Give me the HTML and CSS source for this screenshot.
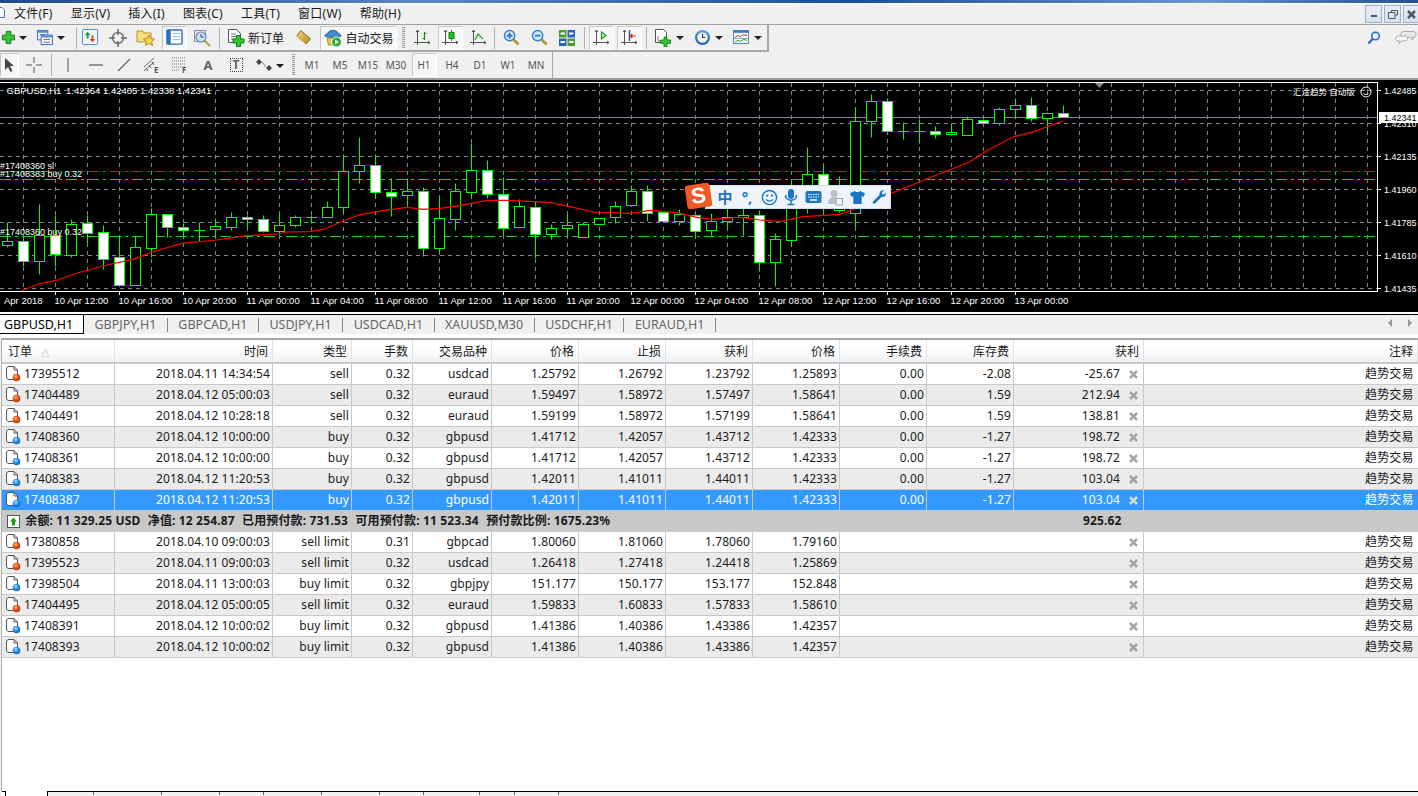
FILE: index.html
```html
<!DOCTYPE html>
<html lang="zh">
<head>
    <meta charset="UTF-8">
    <title>MetaTrader 4</title>
    <link rel="stylesheet" href="styles.css">
</head>
<body>
    <svg class="defs" width="0" height="0">
        <defs>
            <radialGradient id="ballRed" cx="40%" cy="35%" r="70%"><stop offset="0" stop-color="#ffb080"/><stop offset=".5" stop-color="#e8501c"/><stop offset="1" stop-color="#b02a08"/></radialGradient>
            <radialGradient id="ballBlue" cx="40%" cy="35%" r="70%"><stop offset="0" stop-color="#a8e0ff"/><stop offset=".5" stop-color="#2a90e0"/><stop offset="1" stop-color="#0c5cb0"/></radialGradient>
            <linearGradient id="gold" x1="0" y1="0" x2="1" y2="1"><stop offset="0" stop-color="#f4d878"/><stop offset="1" stop-color="#b08420"/></linearGradient>
            <linearGradient id="blueFace" x1="0" y1="0" x2="0" y2="1"><stop offset="0" stop-color="#5aa0e0"/><stop offset="1" stop-color="#1c5ca8"/></linearGradient>
            <symbol id="i-plus" viewBox="0 0 16 16"><path d="M5.5 1.5h5v4h4v5h-4v4h-5v-4h-4v-5h4z" fill="#35c435" stroke="#0e7d0e"/></symbol>
            <symbol id="i-profile" viewBox="0 0 18 18"><rect x="1.5" y="1.5" width="11" height="10" fill="#e8f0fa" stroke="#3a70b0"/><rect x="1.5" y="1.5" width="11" height="2.5" fill="#5a90d0"/><rect x="5.5" y="6.5" width="12" height="10" fill="#f4f8fd" stroke="#3a70b0"/><rect x="5.5" y="6.5" width="12" height="2.5" fill="#5a90d0"/><path d="M4 6h6M8 11h7M8 14h7" stroke="#666"/></symbol>
            <symbol id="i-market" viewBox="0 0 18 18"><rect x=".5" y=".5" width="16" height="16" rx="1.5" fill="#eef4fb" stroke="#4a86c8"/><path d="M6 3l3 3.5H7V10H5V6.5H3z" fill="#22a022"/><path d="M11 14l-3-3.500h2V7h2v3.500h2z" fill="#d84020"/></symbol>
            <symbol id="i-nav" viewBox="0 0 18 18"><circle cx="9" cy="9" r="5.500" fill="none" stroke="#777" stroke-width="1.500"/><path d="M9 0v6M9 12v6M0 9h6M12 9h6" stroke="#666" stroke-width="1.500"/></symbol>
            <symbol id="i-folder" viewBox="0 0 20 18"><path d="M1 2h6l1 2h7v9H1z" fill="#f4dc80" stroke="#b89030"/><path d="M13 6l1.700 3.600 3.800.5-2.800 2.600.8 3.800-3.500-2-3.500 2 .8-3.800-2.800-2.600 3.800-.5z" fill="#f8d848" stroke="#b08a20"/></symbol>
            <symbol id="i-terminal" viewBox="0 0 18 18"><rect x="1" y="1" width="16" height="15" rx="1" fill="#fff" stroke="#2a70c0" stroke-width="1.500"/><rect x="1" y="1" width="4" height="15" fill="#2a70c0"/><path d="M7 5h8M7 8h8M7 11h8" stroke="#8ab0dc"/></symbol>
            <symbol id="i-tester" viewBox="0 0 18 18"><rect x="1.500" y="1.500" width="11" height="11" fill="#e4e8ee" stroke="#8a94a4"/><circle cx="8" cy="8" r="5" fill="#cfe2f6" stroke="#6a88b0" stroke-width="1.200"/><path d="M8 5v3h2.500" stroke="#345" fill="none"/><path d="M12 12l5 5" stroke="#c09a30" stroke-width="2"/></symbol>
            <symbol id="i-order" viewBox="0 0 20 20"><path d="M2.500 1.500h8l4 4v9h-12z" fill="#fff" stroke="#555"/><path d="M5 6h5M5 8.500h7M5 11h3" stroke="#777"/><path d="M10.500 7.500h4v3.500H18v4h-3.500v3.500h-4V15H7v-4h3.500z" fill="#35c435" stroke="#0e7d0e"/></symbol>
            <symbol id="i-book" viewBox="0 0 18 18"><path d="M6 1.500l10.500 9-5 5.500L1.500 8z" fill="url(#gold)" stroke="#8a6a18"/><path d="M1.500 8l10 8.500" stroke="#fff3c0"/></symbol>
            <symbol id="i-auto" viewBox="0 0 20 20"><path d="M2 8c0-2 3-2 3.500-4 2-2 7-2 9 0 .5 2 3.500 2 3.500 4-3 2-13 2-16 0z" fill="#3f8fd0" stroke="#1e5e98"/><path d="M4 10h12l-1.500 7h-9z" fill="#e0c850" stroke="#a89028"/><circle cx="13.500" cy="14" r="5" fill="#2aa83a" stroke="#fff"/><path d="M12 11.500l4 2.500-4 2.500z" fill="#fff"/></symbol>
            <symbol id="i-bars" viewBox="0 0 18 18"><path d="M4.500 1v15M1 13.500h16" stroke="#555"/><path d="M3 3l1.500-2L6 3M15 12l2 1.500-2 1.500" fill="none" stroke="#555"/><path d="M11.500 3v8M9.500 9.500h2M11.500 4.500h2" stroke="#0c9a0c" stroke-width="1.200"/></symbol>
            <symbol id="i-candle" viewBox="0 0 18 18"><path d="M4.500 1v15M1 13.500h16" stroke="#555"/><path d="M3 3l1.500-2L6 3M15 12l2 1.500-2 1.500" fill="none" stroke="#555"/><path d="M10.500 1v11" stroke="#0c8a0c"/><rect x="8" y="3.500" width="5" height="6" fill="#22c022" stroke="#0c8a0c"/></symbol>
            <symbol id="i-line" viewBox="0 0 18 18"><path d="M4.500 1v15M1 13.500h16" stroke="#555"/><path d="M3 3l1.500-2L6 3M15 12l2 1.500-2 1.500" fill="none" stroke="#555"/><path d="M6 11l3-6 5 5" fill="none" stroke="#28a028" stroke-width="1.200"/></symbol>
            <symbol id="i-zoomin" viewBox="0 0 18 18"><path d="M10.500 10.500l6 6" stroke="#b89a30" stroke-width="3"/><circle cx="7" cy="7" r="5.500" fill="#cfe6fa" stroke="#3a80c8" stroke-width="1.500"/><path d="M4 7h6M7 4v6" stroke="#2a70b8" stroke-width="1.800"/></symbol>
            <symbol id="i-zoomout" viewBox="0 0 18 18"><path d="M10.500 10.500l6 6" stroke="#b89a30" stroke-width="3"/><circle cx="7" cy="7" r="5.500" fill="#cfe6fa" stroke="#3a80c8" stroke-width="1.500"/><path d="M4 7h6" stroke="#2a70b8" stroke-width="1.800"/></symbol>
            <symbol id="i-tile" viewBox="0 0 16 16"><rect width="7.500" height="7.500" fill="#4a9a30"/><rect x="8.500" width="7.500" height="7.500" fill="#2a60c0"/><rect y="8.500" width="7.500" height="7.500" fill="#2a60c0"/><rect x="8.500" y="8.500" width="7.500" height="7.500" fill="#4a9a30"/><path d="M1.500 3.500h4.500M10 3.500h4.500M1.500 12h4.500M10 12h4.500" stroke="#fff" stroke-width="2"/></symbol>
            <symbol id="i-shift" viewBox="0 0 18 18"><path d="M4.500 1v15M1 13.500h16" stroke="#555"/><path d="M3 3l1.500-2L6 3M15 12l2 1.500-2 1.500" fill="none" stroke="#555"/><path d="M9.500 3l4.500 3.500-4.500 3.500z" fill="#cdeccd" stroke="#14a014" stroke-width="1.200"/></symbol>
            <symbol id="i-scroll" viewBox="0 0 18 18"><path d="M4.500 1v15M1 13.500h16" stroke="#555"/><path d="M3 3l1.500-2L6 3M15 12l2 1.500-2 1.500" fill="none" stroke="#555"/><path d="M9.500 1v11" stroke="#2a5ca8" stroke-width="1.500"/><path d="M16 7h-4M12 5v4l-2-2z" fill="#c83818" stroke="#c83818"/></symbol>
            <symbol id="i-newchart" viewBox="0 0 18 18"><path d="M1.500 .5h8l3 3v10h-11z" fill="#fff" stroke="#555"/><path d="M4 7v5h5" fill="none" stroke="#777"/><path d="M10 8h3v3h3.500v3.500H13V18h-3v-3.500H6.500V11H10z" fill="#35c435" stroke="#0e7d0e" stroke-width=".8"/></symbol>
            <symbol id="i-clock" viewBox="0 0 18 18"><circle cx="9" cy="9" r="8" fill="url(#blueFace)"/><circle cx="9" cy="9" r="5.500" fill="#f4f4e8"/><path d="M9 5v4h3" fill="none" stroke="#335" stroke-width="1.300"/></symbol>
            <symbol id="i-template" viewBox="0 0 18 16"><rect x=".5" y=".5" width="16" height="14" fill="#f4f8fc" stroke="#4a80b8"/><rect x=".5" y=".5" width="16" height="2.500" fill="#3a78c0"/><path d="M2 8l3-2 3 1 3-2 4 1" fill="none" stroke="#b03010"/><path d="M1 9h15" stroke="#8aa0b8"/><path d="M2 13l3-2 3 1 3-2 4 1" fill="none" stroke="#2a9a2a"/></symbol>
            <symbol id="i-sell" viewBox="0 0 16 17"><path d="M1.500 4c0-1.500 1-2.500 2.500-2.500h5l3.500 3.500v9.500H4c-1.500 0-2.500-1-2.500-2.500z" fill="#fff" stroke="#555"/><path d="M9 1.500v3.500h3.500" fill="none" stroke="#555"/><circle cx="11.500" cy="12.500" r="3.800" fill="url(#ballRed)"/></symbol>
            <symbol id="i-buy" viewBox="0 0 16 17"><path d="M1.500 4c0-1.500 1-2.500 2.500-2.500h5l3.500 3.500v9.500H4c-1.500 0-2.500-1-2.500-2.500z" fill="#fff" stroke="#555"/><path d="M9 1.500v3.500h3.500" fill="none" stroke="#555"/><circle cx="11.500" cy="12.500" r="3.800" fill="url(#ballBlue)"/></symbol>
            <symbol id="i-x" viewBox="0 0 9 9"><path d="M1 1l7 7M8 1L1 8" stroke="currentColor" stroke-width="2.500"/></symbol>
        </defs>
    </svg>

    <div class="titlebar"></div>

    <div class="menubar">
        <svg class="app-ico" width="5" height="11" viewBox="0 0 5 11"><path d="M-3 .5h5l2.500 2.500v7.500h-8z" fill="#fff" stroke="#4a80c0"/></svg>
        <span class="menu-item">文件(F)</span>
        <span class="menu-item">显示(V)</span>
        <span class="menu-item">插入(I)</span>
        <span class="menu-item">图表(C)</span>
        <span class="menu-item">工具(T)</span>
        <span class="menu-item">窗口(W)</span>
        <span class="menu-item">帮助(H)</span>
        <div class="win-btns">
            <span class="win-btn"><svg width="8" height="8"><rect x="1" y="5" width="6" height="2" fill="#556"/></svg></span>
            <span class="win-btn"><svg width="10" height="9"><path d="M3.500 2.500v-2h6v4.500h-2M.5 2.500h6.500v6H.5z" fill="none" stroke="#556"/></svg></span>
            <span class="win-btn"><svg width="9" height="9"><use href="#i-x" color="#556"/></svg></span>
        </div>
    </div>

    <div class="toolrow-wrap">
        <div class="toolrow row-one">
            <span class="btn w16"><svg width="15" height="15"><use href="#i-plus"/></svg></span>
            <span class="drop first"></span>
            <span class="btn"><svg width="17" height="17"><use href="#i-profile"/></svg></span>
            <span class="drop"></span>
            <span class="sep sep-a"></span>
            <span class="btn"><svg width="17" height="17"><use href="#i-market"/></svg></span>
            <span class="btn"><svg width="18" height="18"><use href="#i-nav"/></svg></span>
            <span class="btn"><svg width="20" height="18"><use href="#i-folder"/></svg></span>
            <span class="btn"><span class="pressed"><svg width="17" height="17"><use href="#i-terminal"/></svg></span></span>
            <span class="btn"><svg width="18" height="18"><use href="#i-tester"/></svg></span>
            <span class="sep sep-w"></span>
            <span class="btn w68 with-label"><svg width="20" height="20"><use href="#i-order"/></svg><span>新订单</span></span>
            <span class="btn w27"><svg width="17" height="17"><use href="#i-book"/></svg></span>
            <span class="btn w77 auto"><span class="pressed wide"><svg width="20" height="20"><use href="#i-auto"/></svg><span>自动交易</span></span></span>
            <span class="grip"></span>
            <span class="btn"><svg width="18" height="18"><use href="#i-bars"/></svg></span>
            <span class="btn"><span class="pressed"><svg width="18" height="18"><use href="#i-candle"/></svg></span></span>
            <span class="btn"><svg width="18" height="18"><use href="#i-line"/></svg></span>
            <span class="sep"></span>
            <span class="btn"><svg width="17" height="17"><use href="#i-zoomin"/></svg></span>
            <span class="btn"><svg width="17" height="17"><use href="#i-zoomout"/></svg></span>
            <span class="btn"><svg width="16" height="16"><use href="#i-tile"/></svg></span>
            <span class="sep sep-w"></span>
            <span class="btn"><span class="pressed"><svg width="18" height="18"><use href="#i-shift"/></svg></span></span>
            <span class="btn"><span class="pressed"><svg width="18" height="18"><use href="#i-scroll"/></svg></span></span>
            <span class="sep sep-w"></span>
            <span class="btn"><svg width="18" height="18"><use href="#i-newchart"/></svg></span>
            <span class="drop"></span>
            <span class="btn"><svg width="17" height="17"><use href="#i-clock"/></svg></span>
            <span class="drop"></span>
            <span class="btn"><svg width="17" height="15"><use href="#i-template"/></svg></span>
            <span class="drop"></span>
        </div>
        <svg class="search-ico" width="14" height="14" viewBox="0 0 14 14"><circle cx="8.500" cy="5" r="3.800" fill="#eaf2fb" stroke="#2a66c8" stroke-width="1.500"/><path d="M5.500 8L1.500 12.500" stroke="#2a66c8" stroke-width="2.200"/></svg>
        <svg class="chat-ico" width="22" height="16" viewBox="0 0 22 16"><path d="M9 1.500h9c2 0 3 1 3 3s-1 3-3 3h-1l1 2.500-3.500-2.500H9c-2 0-3-1-3-3s1-3 3-3z" fill="#e8e8e8" stroke="#aaa"/><path d="M3 6h7c1.500 0 2.500 1 2.500 2.500S11.500 11 10 11H6.500L4 14l.5-3H3C1.500 11 .5 10 .5 8.500S1.500 6 3 6z" fill="#f4f4f4" stroke="#aaa"/></svg>
    </div>

    <div class="toolrow row-two">
        <span class="btn w19"><span class="pressed"><svg width="12" height="16" viewBox="0 0 12 16"><path d="M1 1v12l3-3 2.500 5 2-1L6 9h4z" fill="#444"/></svg></span></span>
        <span class="btn"><svg width="16" height="16"><path d="M8 0v6M8 10v6M0 8h6M10 8h6" stroke="#555"/></svg></span>
        <span class="sep sep-w"></span>
        <span class="btn"><svg width="4" height="14"><path d="M2 0v14" stroke="#555"/></svg></span>
        <span class="btn"><svg width="14" height="4"><path d="M0 2h14" stroke="#555" stroke-width="1.200"/></svg></span>
        <span class="btn"><svg width="14" height="14"><path d="M1 13L13 1" stroke="#666" stroke-width="1.200"/></svg></span>
        <span class="btn"><svg width="18" height="18" viewBox="0 0 18 18"><path d="M1 11l10-9M1 15l10-9M3 12l2 3M6 9l2 3M9 6l2 3" stroke="#666" fill="none"/><text x="11" y="17" class="tool-sub">E</text></svg></span>
        <span class="btn"><svg width="18" height="18" viewBox="0 0 18 18"><path d="M1 2h13M1 5h13M1 8h13M1 11h13M1 14h8" stroke="#777" stroke-dasharray="1 1"/><text x="11" y="17" class="tool-sub">F</text></svg></span>
        <span class="btn tool-a">A</span>
        <span class="btn"><span class="tool-t">T</span></span>
        <span class="btn"><svg width="16" height="14" viewBox="0 0 16 14"><path d="M3 1l3 3-3 3-3-3zM13 7l3 3-3 3-3-3z" fill="#444"/><path d="M6 4l4 5" stroke="#777"/></svg></span>
        <span class="drop narrow"></span>
        <span class="grip grip-two"></span>
        <span class="btn tf">M1</span>
        <span class="btn tf">M5</span>
        <span class="btn tf">M15</span>
        <span class="btn tf">M30</span>
        <span class="btn tf"><span class="pressed">H1</span></span>
        <span class="btn tf">H4</span>
        <span class="btn tf">D1</span>
        <span class="btn tf">W1</span>
        <span class="btn tf">MN</span>
    </div>

    <div class="chart-wrap">
        <svg id="chart" class="chart" width="1418" height="234"></svg>
        <div class="ime">
            <span class="ime-logo">S</span>
            <span class="ime-zh">中</span>
            <span class="ime-punct">°,</span>
            <svg width="17" height="17" viewBox="0 0 18 18"><circle cx="9" cy="9" r="7.500" fill="none" stroke="#1b75c4" stroke-width="1.500"/><circle cx="6.500" cy="7" r="1.200" fill="#1b75c4"/><circle cx="11.500" cy="7" r="1.200" fill="#1b75c4"/><path d="M5.500 11c1.500 2.500 5.500 2.500 7 0" fill="none" stroke="#1b75c4" stroke-width="1.300"/></svg>
            <svg width="14" height="18" viewBox="0 0 14 18"><rect x="4" y="1" width="6" height="10" rx="3" fill="#1b75c4"/><path d="M1.500 7c0 7 11 7 11 0M7 12.500V16M3.500 16.500h7" fill="none" stroke="#1b75c4" stroke-width="1.500"/></svg>
            <svg width="17" height="14" viewBox="0 0 17 14"><rect x=".5" y="1" width="16" height="12" rx="2" fill="#1b75c4"/><path d="M3 4.500h11M3 7h11" stroke="#fff" stroke-dasharray="1.500 1"/><path d="M5 10h7" stroke="#fff" stroke-width="1.500"/></svg>
            <svg width="16" height="17" viewBox="0 0 16 17"><circle cx="7" cy="4.500" r="3.500" fill="#b8c2cc"/><path d="M1 15c0-6 3-7 6-7s4 1 5 2v5z" fill="#b8c2cc"/><rect x="9" y="9.500" width="6.500" height="6.500" fill="#eef2f6" stroke="#9aa6b2"/></svg>
            <svg width="15" height="15" viewBox="0 0 16 15"><path d="M5 .5L0 3l1.500 4L3.500 6v8.500h9V6l2 1L16 3 11 .5C10 2 6 2 5 .5z" fill="#1b75c4"/></svg>
            <svg width="16" height="16" viewBox="0 0 16 16"><path d="M15 3.500c.5 2.500-1.500 5-4.500 4.500L4 14.500c-1.500 1-3-.5-2-2L8.500 6C8 3 10.500 .5 13 1.500L10.500 4l2 2z" fill="#1b75c4"/></svg>
        </div>
    </div>

    <div class="tabs">
        <span class="tab active">GBPUSD,H1</span>
        <span class="tab">GBPJPY,H1</span>
        <span class="tab">GBPCAD,H1</span>
        <span class="tab">USDJPY,H1</span>
        <span class="tab">USDCAD,H1</span>
        <span class="tab">XAUUSD,M30</span>
        <span class="tab">USDCHF,H1</span>
        <span class="tab">EURAUD,H1</span>
        <span class="tab-arrows">
            <svg width="5" height="8"><path d="M4 0v8L0 4z" fill="#999"/></svg>
            <svg width="5" height="8"><path d="M1 0v8l4-4z" fill="#999"/></svg>
        </span>
    </div>

    <div class="orders">
        <table class="order-table">
            <colgroup>
                <col class="c-id"><col class="c-time"><col class="c-type"><col class="c-lot"><col class="c-sym">
                <col class="c-px"><col class="c-px"><col class="c-px"><col class="c-px"><col class="c-px"><col class="c-px">
                <col class="c-profit"><col>
            </colgroup>
            <thead>
                <tr>
                    <th class="left">订单 <span class="sort">△</span></th><th>时间</th><th>类型</th><th>手数</th><th>交易品种</th><th>价格</th><th>止损</th><th>获利</th><th>价格</th><th>手续费</th><th>库存费</th><th class="th-profit">获利</th><th>注释</th>
                </tr>
            </thead>
            <tbody>
                <tr><td class="id"><svg class="doc"><use href="#i-sell"/></svg>17395512</td><td>2018.04.11 14:34:54</td><td>sell</td><td>0.32</td><td>usdcad</td><td>1.25792</td><td>1.26792</td><td>1.23792</td><td>1.25893</td><td>0.00</td><td>-2.08</td><td class="profit">-25.67<svg class="x"><use href="#i-x"/></svg></td><td>趋势交易</td></tr>
                <tr class="alt"><td class="id"><svg class="doc"><use href="#i-sell"/></svg>17404489</td><td>2018.04.12 05:00:03</td><td>sell</td><td>0.32</td><td>euraud</td><td>1.59497</td><td>1.58972</td><td>1.57497</td><td>1.58641</td><td>0.00</td><td>1.59</td><td class="profit">212.94<svg class="x"><use href="#i-x"/></svg></td><td>趋势交易</td></tr>
                <tr><td class="id"><svg class="doc"><use href="#i-sell"/></svg>17404491</td><td>2018.04.12 10:28:18</td><td>sell</td><td>0.32</td><td>euraud</td><td>1.59199</td><td>1.58972</td><td>1.57199</td><td>1.58641</td><td>0.00</td><td>1.59</td><td class="profit">138.81<svg class="x"><use href="#i-x"/></svg></td><td>趋势交易</td></tr>
                <tr class="alt"><td class="id"><svg class="doc"><use href="#i-buy"/></svg>17408360</td><td>2018.04.12 10:00:00</td><td>buy</td><td>0.32</td><td>gbpusd</td><td>1.41712</td><td>1.42057</td><td>1.43712</td><td>1.42333</td><td>0.00</td><td>-1.27</td><td class="profit">198.72<svg class="x"><use href="#i-x"/></svg></td><td>趋势交易</td></tr>
                <tr><td class="id"><svg class="doc"><use href="#i-buy"/></svg>17408361</td><td>2018.04.12 10:00:00</td><td>buy</td><td>0.32</td><td>gbpusd</td><td>1.41712</td><td>1.42057</td><td>1.43712</td><td>1.42333</td><td>0.00</td><td>-1.27</td><td class="profit">198.72<svg class="x"><use href="#i-x"/></svg></td><td>趋势交易</td></tr>
                <tr class="alt"><td class="id"><svg class="doc"><use href="#i-buy"/></svg>17408383</td><td>2018.04.12 11:20:53</td><td>buy</td><td>0.32</td><td>gbpusd</td><td>1.42011</td><td>1.41011</td><td>1.44011</td><td>1.42333</td><td>0.00</td><td>-1.27</td><td class="profit">103.04<svg class="x"><use href="#i-x"/></svg></td><td>趋势交易</td></tr>
                <tr class="selected"><td class="id"><svg class="doc"><use href="#i-buy"/></svg>17408387</td><td>2018.04.12 11:20:53</td><td>buy</td><td>0.32</td><td>gbpusd</td><td>1.42011</td><td>1.41011</td><td>1.44011</td><td>1.42333</td><td>0.00</td><td>-1.27</td><td class="profit">103.04<svg class="x"><use href="#i-x"/></svg></td><td>趋势交易</td></tr>
                <tr class="summary">
                    <td colspan="11" class="id">
                        <svg class="up-box" width="13" height="13" viewBox="0 0 13 13"><rect x=".5" y=".5" width="12" height="12" fill="#fff" stroke="#555"/><path d="M6.500 2.500l3.500 4H8v4H5v-4H3z" fill="#16a016"/></svg>
                        <span class="sum-a">余额: 11 329.25 USD</span>
                        <span class="sum-b">净值: 12 254.87</span>
                        <span class="sum-c">已用预付款: 731.53</span>
                        <span class="sum-d">可用预付款: 11 523.34</span>
                        <span class="sum-e">预付款比例: 1675.23%</span>
                    </td>
                    <td class="profit-sum">925.62</td>
                    <td></td>
                </tr>
                <tr><td class="id"><svg class="doc"><use href="#i-sell"/></svg>17380858</td><td>2018.04.10 09:00:03</td><td>sell limit</td><td>0.31</td><td>gbpcad</td><td>1.80060</td><td>1.81060</td><td>1.78060</td><td>1.79160</td><td colspan="3" class="profit"><svg class="x"><use href="#i-x"/></svg></td><td>趋势交易</td></tr>
                <tr class="alt"><td class="id"><svg class="doc"><use href="#i-sell"/></svg>17395523</td><td>2018.04.11 09:00:03</td><td>sell limit</td><td>0.32</td><td>usdcad</td><td>1.26418</td><td>1.27418</td><td>1.24418</td><td>1.25869</td><td colspan="3" class="profit"><svg class="x"><use href="#i-x"/></svg></td><td>趋势交易</td></tr>
                <tr><td class="id"><svg class="doc"><use href="#i-buy"/></svg>17398504</td><td>2018.04.11 13:00:03</td><td>buy limit</td><td>0.32</td><td>gbpjpy</td><td>151.177</td><td>150.177</td><td>153.177</td><td>152.848</td><td colspan="3" class="profit"><svg class="x"><use href="#i-x"/></svg></td><td>趋势交易</td></tr>
                <tr class="alt"><td class="id"><svg class="doc"><use href="#i-sell"/></svg>17404495</td><td>2018.04.12 05:00:05</td><td>sell limit</td><td>0.32</td><td>euraud</td><td>1.59833</td><td>1.60833</td><td>1.57833</td><td>1.58610</td><td colspan="3" class="profit"><svg class="x"><use href="#i-x"/></svg></td><td>趋势交易</td></tr>
                <tr><td class="id"><svg class="doc"><use href="#i-buy"/></svg>17408391</td><td>2018.04.12 10:00:02</td><td>buy limit</td><td>0.32</td><td>gbpusd</td><td>1.41386</td><td>1.40386</td><td>1.43386</td><td>1.42357</td><td colspan="3" class="profit"><svg class="x"><use href="#i-x"/></svg></td><td>趋势交易</td></tr>
                <tr class="alt"><td class="id"><svg class="doc"><use href="#i-buy"/></svg>17408393</td><td>2018.04.12 10:00:02</td><td>buy limit</td><td>0.32</td><td>gbpusd</td><td>1.41386</td><td>1.40386</td><td>1.43386</td><td>1.42357</td><td colspan="3" class="profit"><svg class="x"><use href="#i-x"/></svg></td><td>趋势交易</td></tr>
            </tbody>
        </table>
        <div class="bottom-strip">
            <span class="corner"></span>
            <div class="taskbox">
                <i class="t1"></i><i class="t2"></i><i class="t3"></i><i class="t4"></i><i class="t5"></i>
                <i class="t6"></i><i class="t7"></i><i class="t8"></i><i class="t9"></i><i class="t10"></i>
            </div>
        </div>
    </div>

    <script src="chart.js"></script>
</body>
</html>
```

FILE: styles.css
```css
* {
    box-sizing: border-box;
}
html, body {
    margin: 0;
    height: 796px;
    overflow: hidden;
}
body {
    width: 1418px;
    background-color: #f0f0f0;
    color: #1a1a1a;
    font-family: "Noto Sans", "Noto Sans CJK SC", sans-serif;
    font-size: 12px;
}
.defs {
    position: absolute;
}

/* title and menu */
.titlebar {
    height: 3px;
    background: linear-gradient(90deg, #1d4a8c, #5b86c6 30%, #1d4f96 60%, #6c94cf 85%, #244f90);
    border-bottom: 0;
}
.menubar {
    height: 22px;
    display: flex;
    align-items: center;
    gap: 18px;
    padding-left: 14px;
    background-color: #f0f0f0;
    border-top: 1px solid #fff;
    border-bottom: 1px solid #a0a0a0;
    font-size: 12px;
    position: relative;
}
.app-ico {
    position: absolute;
    left: 0;
    top: 3px;
}
.menu-item {
    line-height: 20px;
    letter-spacing: .25px;
}
.win-btns {
    position: absolute;
    right: -2px;
    top: 1px;
    display: flex;
    gap: 2px;
}
.win-btn {
    width: 17px;
    height: 18px;
    display: flex;
    align-items: center;
    justify-content: center;
    background: linear-gradient(#e6edf5, #d6e0ec);
    border: 1px solid #9fb2c8;
}

/* toolbars */
.toolrow-wrap {
    position: relative;
}
.toolrow {
    display: flex;
    align-items: center;
    height: 27px;
    padding-right: 2px;
}
.row-one {
    width: 769px;
    border-right: 2px solid #a8a8a8;
    border-bottom: 2px solid #a8a8a8;
}
.row-two {
    width: 1418px;
    padding-right: 0;
    height: 28px;
    border-bottom: 2px solid #9a9a9a;
    background: linear-gradient(90deg, #f0f0f0 552px, #a8a8a8 552px, #a8a8a8 553px, #f0f0f0 553px);
}
.btn {
    flex: none;
    width: 28px;
    height: 25px;
    display: flex;
    align-items: center;
    justify-content: center;
}
.w16 { width: 16px; }
.w19 { width: 19px; margin-right: 1px; }
.w27 { width: 27px; }
.w68 { width: 68px; }
.w77 { width: 77px; margin-left: 3px; }
.pressed {
    width: 25px;
    height: 24px;
    display: flex;
    align-items: center;
    justify-content: center;
    background-color: #f7f7f7;
    border: 1px solid #c8c8c8;
    border-right-color: #fff;
    border-bottom-color: #fff;
}
.w19 .pressed {
    width: 19px;
}
.pressed.wide {
    width: 77px;
    gap: 2px;
}
.with-label {
    gap: 2px;
    justify-content: flex-start;
    padding-left: 4px;
}
.sep {
    flex: none;
    width: 1px;
    height: 22px;
    margin: 0 2px;
    background-color: #b0b0b0;
}
.sep-w {
    margin-left: 3px;
}
.sep-a {
    margin-left: 7px;
    margin-right: -1px;
}
.drop {
    flex: none;
    width: 8px;
    height: 4px;
    margin: 1px 4px 0 -1px;
    border-style: solid;
    border-width: 4px 4px 0;
    border-color: #222 transparent transparent;
}
.drop.first {
    margin: 1px 3px 0;
}
.drop.narrow {
    margin: 1px 0 0 -2px;
}
.grip {
    flex: none;
    width: 3px;
    height: 22px;
    margin: 0 3px 0 5px;
    background: repeating-linear-gradient(#999 0 1px, #f0f0f0 1px 2px);
}
.grip-two {
    margin: 0 3px 0 8px;
}
.search-ico {
    position: absolute;
    left: 1367px;
    top: 6px;
}
.chat-ico {
    position: absolute;
    left: 1395px;
    top: 5px;
}
.tf {
    font-size: 10px;
    color: #555;
}
.tf .pressed {
    font-size: 10px;
}
.tool-sub {
    font-size: 8px;
    font-weight: bold;
    fill: #555;
}
.tool-a {
    font-size: 13px;
    font-weight: bold;
    color: #666;
}
.tool-t {
    width: 13px;
    height: 14px;
    line-height: 12px;
    font-size: 12px;
    font-weight: bold;
    text-align: center;
    color: #666;
    border: 1px dotted #444;
}

/* chart */
.chart-wrap {
    position: relative;
    height: 234px;
    background-color: #000;
}
.chart {
    display: block;
    font-family: "Liberation Sans", "Noto Sans CJK SC", sans-serif;
    font-size: 9.5px;
}
.ime {
    position: absolute;
    left: 705px;
    top: 105px;
    width: 186px;
    height: 24px;
    display: grid;
    grid-template-columns: repeat(8, 22px);
    justify-items: center;
    align-items: center;
    padding-left: 8px;
    background-color: #eef4fa;
    border: 1px solid #cfe0f0;
}
.ime-logo {
    position: absolute;
    left: -20px;
    top: -2px;
    width: 25px;
    height: 24px;
    background-color: #ef5a24;
    color: #fff;
    font: bold 22px/23px "Liberation Sans", sans-serif;
    text-align: center;
    border-radius: 3px;
    transform: rotate(-8deg);
}
.ime-zh {
    color: #1b75c4;
    font-size: 15px;
    line-height: 20px;
    font-weight: bold;
}
.ime-punct {
    color: #1b75c4;
    font-size: 15px;
    font-weight: bold;
    line-height: 18px;
}

/* tabs */
.tabs {
    height: 20px;
    display: flex;
    align-items: center;
    position: relative;
    background-color: #f0f0f0;
    border-top: 1px solid #000;
    font-size: 12.5px;
}
.tab {
    height: 14px;
    line-height: 14px;
    padding: 0 10.5px;
    color: #666;
    border-right: 1px solid #888;
}
.tab.active {
    height: 19px;
    line-height: 19px;
    padding: 0 0 0 4px;
    width: 84px;
    margin-top: 0;
    color: #000;
    background-color: #fff;
    border-right: 1px solid #000;
    border-bottom: 1px solid #000;
}
.tab-arrows {
    position: absolute;
    right: 6px;
    top: 4px;
    display: flex;
    gap: 14px;
}

/* order table */
.orders {
    height: 462px;
    padding: 4px 0 0;
    background-color: #fff;
    position: relative;
    border-left: 1px solid transparent;
    background-clip: padding-box;
}
.orders::before {
    content: "";
    position: absolute;
    left: 0;
    top: 4px;
    bottom: 5px;
    width: 1px;
    background-color: #b0b0b0;
}
.order-table {
    width: 1417px;
    table-layout: fixed;
    border-collapse: collapse;
    border-left: 1px solid #b0b0b0;
}
.c-id { width: 113px; }
.c-time { width: 158px; }
.c-type { width: 79px; }
.c-lot { width: 61px; }
.c-sym { width: 79px; }
.c-px { width: 87px; }
.c-profit { width: 130px; }
th {
    height: 24px;
    padding: 0 4px 0 0;
    font-weight: normal;
    text-align: right;
    background: linear-gradient(#fff 40%, #eef0f3);
    border-top: 2px solid #a6a6a6;
    border-right: 1px solid #e2e2e2;
    border-bottom: 2px solid #c8c8c8;
}
th.left {
    text-align: left;
    padding-left: 6px;
}
th.th-profit {
    padding-right: 4px;
}
.sort {
    margin-left: 6px;
    font-size: 8px;
    color: #888;
}
td {
    height: 21px;
    padding: 0 2px 0 0;
    text-align: right;
    line-height: 20px;
    letter-spacing: .1px;
    white-space: nowrap;
    border-right: 1px solid #c8c8c8;
    border-bottom: 1px solid #c8c8c8;
}
td:last-child {
    border-right: 0;
    padding-right: 4px;
}
.alt td {
    background-color: #ebebeb;
}
.selected td {
    background-color: #3399ff;
    color: #fff;
}
.summary td {
    background-color: #c8c8c8;
    font-weight: bold;
    letter-spacing: .15px;
    border-right: 0;
}
td.id {
    text-align: left;
    padding-left: 3px;
}
.doc {
    width: 16px;
    height: 17px;
    margin-right: 3px;
    vertical-align: -4px;
}
.up-box {
    margin: 0 2px 0 2px;
    vertical-align: -3px;
}
.summary span {
    margin-right: 4px;
}
.profit {
    padding-right: 5px;
}
.profit-sum {
    padding-right: 22px;
}
.x {
    width: 9px;
    height: 9px;
    margin-left: 9px;
    color: #a4a4a4;
    vertical-align: -1px;
}
.selected .x {
    color: #d8d8d8;
}

/* odd bits left at the bottom of the window */
.bottom-strip {
    position: absolute;
    left: 0;
    right: 0;
    bottom: 0;
    height: 5px;
    background-color: #fff;
}
.corner {
    position: absolute;
    left: 1px;
    top: 0;
    width: 4px;
    height: 5px;
    border-top: 1px solid #000;
    border-right: 1px solid #000;
}
.taskbox {
    position: absolute;
    left: 46px;
    right: 0;
    top: 0;
    bottom: 0;
    background-color: #f0f0f0;
    border-top: 1px solid #000;
    border-left: 1px solid #000;
}
.taskbox i {
    position: absolute;
    top: 0;
    width: 1px;
    height: 3px;
    background-color: #666;
}
.t1 { left: 45px; }
.t2 { left: 113px; }
.t3 { left: 171px; }
.t4 { left: 215px; }
.t5 { left: 273px; }
.t6 { left: 331px; }
.t7 { left: 375px; }
.t8 { left: 431px; }
.t9 { left: 466px; }
.t10 { left: 510px; }
```

FILE: chart.js
```js
// candles, read from the picture: wick top, wick bottom, body top, body bottom, white body
// values are in thirds of a pixel from the top of the chart
var candles = [
    [425, 500, 484, 494, 0], [470, 558, 484, 542, 1], [372, 582, 466, 542, 0], [404, 558, 466, 521, 1],
    [418, 530, 433, 524, 0], [405, 490, 430, 458, 1], [435, 566, 457, 536, 1], [469, 533, 532, 614, 1],
    [469, 614, 502, 614, 0], [385, 530, 403, 503, 0], [403, 470, 403, 440, 1], [430, 467, 442, 449, 1],
    [427, 483, 449, 449, 0], [415, 467, 439, 446, 0], [396, 450, 412, 440, 0], [405, 445, 412, 418, 1],
    [405, 455, 418, 452, 1], [400, 462, 436, 452, 0], [405, 440, 412, 436, 0], [405, 430, 412, 412, 0],
    [363, 412, 382, 412, 0], [222, 400, 274, 382, 0], [170, 310, 256, 274, 0], [222, 355, 256, 337, 1],
    [295, 407, 337, 349, 1], [295, 375, 334, 346, 0], [322, 527, 334, 505, 1], [350, 518, 415, 505, 0],
    [310, 450, 334, 418, 0], [188, 350, 271, 337, 0], [240, 355, 271, 343, 1], [290, 465, 343, 445, 1],
    [358, 442, 379, 442, 0], [362, 535, 382, 463, 1], [433, 476, 445, 463, 0], [402, 466, 436, 445, 0],
    [427, 472, 433, 472, 0], [415, 433, 415, 433, 0], [363, 428, 379, 412, 0], [315, 376, 334, 376, 0],
    [315, 422, 334, 400, 1], [397, 424, 397, 424, 1], [388, 436, 403, 424, 0], [403, 470, 404, 454, 1],
    [400, 465, 424, 451, 0], [385, 445, 412, 424, 0], [385, 465, 406, 412, 0], [390, 572, 406, 547, 1],
    [460, 617, 478, 547, 0], [300, 498, 340, 481, 0], [202, 400, 283, 380, 0], [256, 400, 283, 340, 1],
    [289, 395, 330, 390, 0], [80, 440, 124, 400, 0], [42, 170, 64, 124, 0], [55, 155, 64, 154, 1],
    [127, 176, 154, 154, 0], [116, 190, 152, 152, 0], [139, 173, 154, 163, 1], [131, 164, 157, 163, 0],
    [109, 166, 118, 166, 0], [118, 130, 119, 130, 1], [82, 136, 88, 130, 0], [55, 112, 76, 88, 0],
    [52, 124, 76, 115, 1], [97, 154, 100, 115, 0], [76, 112, 100, 112, 1]
];

var maLine = [
    [65, 632], [115, 612], [165, 602], [235, 578], [320, 555], [400, 538], [450, 518], [545, 490],
    [650, 480], [740, 467], [830, 462], [860, 456], [930, 455], [975, 447], [1030, 422], [1080, 404],
    [1130, 395], [1220, 382], [1270, 388], [1320, 385], [1380, 377], [1460, 361], [1520, 361], [1650, 367],
    [1720, 382], [1780, 396], [1890, 400], [1950, 391], [2030, 398], [2090, 412], [2140, 418], [2220, 412],
    [2280, 420], [2340, 425], [2410, 410], [2520, 403], [2570, 385], [2670, 342], [2780, 297], [2910, 245],
    [2960, 212], [3040, 170], [3095, 157], [3190, 122]
];

var prices = ['1.42485', '1.42310', '1.42135', '1.41960', '1.41785', '1.41610', '1.41435'];
var times = ['10 Apr 12:00', '10 Apr 16:00', '10 Apr 20:00', '11 Apr 00:00', '11 Apr 04:00', '11 Apr 08:00',
    '11 Apr 12:00', '11 Apr 16:00', '11 Apr 20:00', '12 Apr 00:00', '12 Apr 04:00', '12 Apr 08:00',
    '12 Apr 12:00', '12 Apr 16:00', '12 Apr 20:00', '13 Apr 00:00'];

var chart = document.getElementById('chart');

function add(tag, attrs, text) {
    var el = document.createElementNS('http://www.w3.org/2000/svg', tag);
    for (var key in attrs) {
        el.setAttribute(key, attrs[key]);
    }
    if (text) {
        el.textContent = text;
    }
    chart.appendChild(el);
    return el;
}

function line(x1, y1, x2, y2, color, dash) {
    var attrs = { x1: x1, y1: y1, x2: x2, y2: y2, stroke: color };
    if (dash) {
        attrs['stroke-dasharray'] = dash;
    }
    return add('line', attrs);
}

function px(v) {
    return Math.round(v / 3) + 0.5;
}

function label(x, y, text, color) {
    return add('text', { x: x, y: y, fill: color || '#fff' }, text);
}

// frame of the chart
line(0, 2.5, 1378, 2.5, '#fff');
line(1377.5, 2, 1377.5, 211, '#fff');
line(0, 211.5, 1378, 211.5, '#fff');
line(0, 233.5, 1418, 233.5, '#fff');
line(0, 232.5, 1418, 232.5, '#fff');

// grid
for (var g = 0; g < 7; g++) {
    var gy = 10.5 + 33 * g;
    line(0, gy, 1377, gy, '#778899', '4 4');
    line(1377, gy, 1381, gy, '#fff');
    var tag = label(1384, gy + 3.5, prices[g]);
    tag.setAttribute('font-size', '9px');
}
for (var gx = 23.5; gx < 1377; gx += 32) {
    line(gx, 3, gx, 209, '#778899', '4 4');
}

// levels of the open orders and the bid line
line(0, 37.5, 1377, 37.5, '#778899');
line(0, 91.5, 1377, 91.5, '#ff0000', '11 4 3 4');
line(0, 99.5, 1377, 99.5, '#22cc22', '11 4 3 4');
line(0, 156.5, 1377, 156.5, '#22cc22', '11 4 3 4');

candles.forEach(function (c, i) {
    var x = 7.5 + 16 * i;
    line(x, px(c[0]), x, px(c[1]), '#00ff00');
    if (c[2] === c[3]) {
        line(x - 5.5, px(c[2]), x + 5.5, px(c[2]), c[4] ? '#fff' : '#00ff00');
    } else {
        add('rect', {
            x: x - 5,
            y: px(c[2]),
            width: 10,
            height: px(c[3]) - px(c[2]),
            fill: c[4] ? '#fff' : '#000',
            stroke: '#00ff00'
        });
    }
});

add('polyline', {
    points: maLine.map(function (p) { return (p[0] / 3).toFixed(1) + ',' + (p[1] / 3).toFixed(1); }).join(' '),
    fill: 'none',
    stroke: '#ff0000',
    'stroke-width': 1.2
});

// labels on the chart
add('text', { x: 6.5, y: 13.5, fill: '#fff' }, 'GBPUSD,H1');
label(66, 13.5, '1.42364 1.42405 1.42338 1.42341');
label(0, 88.5, '#17408360 sl').setAttribute('font-size', '9px');
label(0, 96.5, '#17408383 buy 0.32').setAttribute('font-size', '9px');
label(0, 154.5, '#17408360 buy 0.32').setAttribute('font-size', '9px');
label(1293, 15, '汇淦趋势 自动版').setAttribute('font-size', '8.5px');
add('circle', { cx: 1366, cy: 12, r: 5, fill: 'none', stroke: '#fff' });
add('path', { d: 'M1363.500 13c1 2 4 2 5 0M1364 10h1M1367 10h1', fill: 'none', stroke: '#fff' });
add('polygon', { points: '1095,3 1104,3 1099.500,8', fill: '#888' });
line(870, 91.5, 875, 91.5, '#2222dd');

// current price
add('rect', { x: 1379, y: 32, width: 39, height: 11, fill: '#fff' });
label(1384, 41, '1.42341', '#000').setAttribute('font-size', '9px');

// time scale
label(4, 224, 'Apr 2018');
times.forEach(function (t, i) {
    var x = 55.5 + 64 * i;
    line(x, 211, x, 215, '#fff');
    label(x - 1, 224, t);
});
```
